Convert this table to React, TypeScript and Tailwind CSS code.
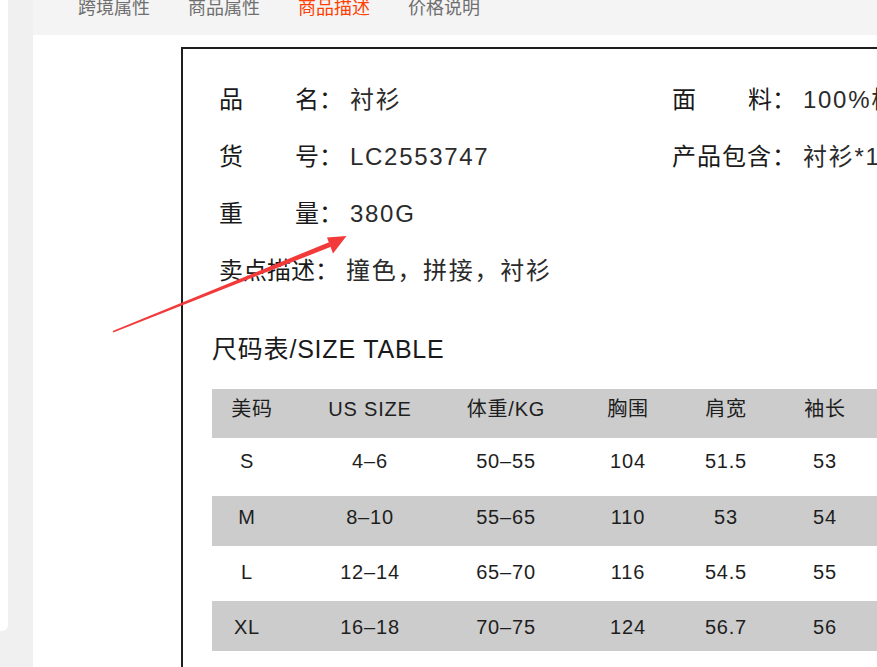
import React from 'react';

const tabs = [
    { label: '跨境属性', active: false },
    { label: '商品属性', active: false },
    { label: '商品描述', active: true },
    { label: '价格说明', active: false },
];

const cols = ['w-[70px]', 'w-[176px]', 'w-[96px]', 'w-[148px]', 'w-[48px]', 'w-[150px]'];

const rows = [
    { cells: ['美码', 'US SIZE', '体重/KG', '胸围', '肩宽', '袖长'], cls: 'h-[49px] pt-[8px] bg-[#cccccc]' },
    { cells: ['S', '4–6', '50–55', '104', '51.5', '53'], cls: 'h-[58px] pt-[11px] bg-white' },
    { cells: ['M', '8–10', '55–65', '110', '53', '54'], cls: 'h-[50px] pt-[9px] bg-[#cccccc]' },
    { cells: ['L', '12–14', '65–70', '116', '54.5', '55'], cls: 'h-[55px] pt-[14px] bg-white' },
    { cells: ['XL', '16–18', '70–75', '124', '56.7', '56'], cls: 'h-[50px] pt-[14px] bg-[#cccccc]' },
];

const Label = ({ a, b }: { a: string; b: string }) => (
    <span className="flex w-[100px] justify-between text-[#1a1a1a]">
        <span>{a}</span>
        <span>{b}</span>
    </span>
);

const Field = ({ label, value }: { label: React.ReactNode; value: string }) => (
    <div className="flex items-center h-[57px]">
        {label}
        <span className="text-[#1a1a1a]">：</span>
        <span className="ml-[7px] text-[#2b2b2b] tracking-[1.7px] whitespace-nowrap">{value}</span>
    </div>
);

export default function App() {
    return (
        <div className="relative flex w-full h-[667px] overflow-hidden bg-[#f0f0f0]" style={{ fontFamily: '"Liberation Sans", "Noto Sans CJK SC", sans-serif' }}>
            {/* sidebar sliver */}
            <div className="w-[8px] h-[631px] shrink-0 bg-white rounded-br-md" />

            <div className="ml-[25px] flex flex-col flex-1 min-w-0">
                {/* tab bar */}
                <div className="h-[35px] shrink-0 bg-[#f4f4f4] flex items-start pl-[45px]">
                    <div className="flex gap-[38px] -mt-[5px]">
                        {tabs.map((t) => (
                            <span
                                key={t.label}
                                className={t.active ? 'text-[18px] leading-[26px] text-[#ff4000]' : 'text-[18px] leading-[26px] text-[#6f6f6f]'}
                            >
                                {t.label}
                            </span>
                        ))}
                    </div>
                </div>

                {/* content */}
                <div className="flex-1 bg-white pl-[148px] pt-[12px]">
                    <div className="w-[760px] h-[700px] border-l-2 border-t-2 border-[#1f1f1f]">
                        {/* product info */}
                        <div className="grid grid-cols-[453px_1fr] pl-[36px] pt-[22px] text-[24px] leading-[30px]">
                            <Field label={<Label a="品" b="名" />} value="衬衫" />
                            <Field label={<Label a="面" b="料" />} value="100%棉" />
                            <Field label={<Label a="货" b="号" />} value="LC2553747" />
                            <Field label={<span className="text-[#1a1a1a] tracking-[1px]">产品包含</span>} value="衬衫*1" />
                            <Field label={<Label a="重" b="量" />} value="380G" />
                            <div />
                            <Field label={<span className="text-[#1a1a1a]">卖点描述</span>} value="撞色，拼接，衬衫" />
                        </div>

                        {/* size table */}
                        <div className="pl-[29px] mt-[35px]">
                            <div className="text-[25px] leading-[30px] text-[#1a1a1a] tracking-[0.8px]">尺码表/SIZE TABLE</div>
                            <div className="mt-[25px] text-[20px] leading-[24px] text-[#1e1e1e]">
                                {rows.map((r, i) => (
                                    <div key={i} className={'flex ' + r.cls}>
                                        {r.cells.map((c, j) => (
                                            <div
                                                key={j}
                                                className={
                                                    cols[j] +
                                                    (i === 0 && j === 0 ? ' pl-[10px]' : '') +
                                                    ' shrink-0 text-center tracking-[0.8px] whitespace-nowrap'
                                                }
                                            >
                                                {c}
                                            </div>
                                        ))}
                                    </div>
                                ))}
                            </div>
                        </div>
                    </div>
                </div>
            </div>

            {/* red annotation arrow */}
            <svg className="absolute left-0 top-0 pointer-events-none" width="877" height="667" viewBox="0 0 877 667">
                <polygon points="112.7,331 113.3,332.4 331,246.8 329,242.2" fill="#f23a3a" />
                <polygon points="346.5,236 327,237.5 333,253.5" fill="#f23a3a" />
            </svg>
        </div>
    );
}
